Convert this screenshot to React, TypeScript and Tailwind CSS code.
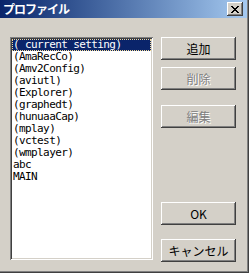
import React from "react";

const items = [
  "( current setting)",
  "(AmaRecCo)",
  "(Amv2Config)",
  "(aviutl)",
  "(Explorer)",
  "(graphedt)",
  "(hunuaaCap)",
  "(mplay)",
  "(vctest)",
  "(wmplayer)",
  "abc",
  "MAIN",
];

const raised =
  "shadow-[inset_-1px_-1px_0_#404040,inset_1px_1px_0_#ffffff,inset_-2px_-2px_0_#808080,inset_2px_2px_0_#d4d0c8]";

function Btn({ label, disabled, className = "" }: { label: string; disabled?: boolean; className?: string }) {
  return (
    <div
      className={`w-[75px] h-[23px] bg-[#d4d0c8] flex items-center justify-center text-[12px] leading-none ${raised} ${className} ${
        disabled ? "text-[#808080] [text-shadow:1px_1px_0_#ffffff]" : "text-black"
      }`}
      style={{ fontFamily: '"Noto Sans CJK JP", sans-serif' }}
    >
      {label}
    </div>
  );
}

export default function App() {
  return (
    <div className="w-[249px] h-[273px] bg-[#d4d0c8] flex flex-col shadow-[inset_-1px_-1px_0_#404040,inset_-2px_-2px_0_#808080]">
      <div className="h-[18px] mr-[2px] bg-gradient-to-r from-[#0a246a] to-[#a6caf0] flex items-center justify-between pl-[3px] pr-[4px]">
        <span
          className="text-white font-bold text-[12px] leading-none tracking-[-1px]"
          style={{ fontFamily: '"Noto Sans CJK JP", sans-serif' }}
        >
          プロファイル
        </span>
        <div className="w-[16px] h-[14px] bg-[#d4d0c8] flex items-center justify-center shadow-[inset_-1px_-1px_0_#404040,inset_1px_1px_0_#ffffff,inset_-2px_-2px_0_#808080,inset_2px_2px_0_#d4d0c8]">
          <svg width="8" height="7" viewBox="0 0 8 7" shapeRendering="crispEdges">
            <path d="M0 0h2v1h-2zM6 0h2v1h-2zM1 1h2v1h-2zM5 1h2v1h-2zM2 2h4v1h-4zM3 3h2v1h-2zM2 4h4v1h-4zM1 5h2v1h-2zM5 5h2v1h-2zM0 6h2v1h-2zM6 6h2v1h-2z" fill="#000" />
          </svg>
        </div>
      </div>
      <div className="flex flex-row pl-[10px] pt-[19px]">
        <div className="w-[143px] h-[223px] bg-white p-[2px] shadow-[inset_1px_1px_0_#808080,inset_-1px_-1px_0_#ffffff,inset_2px_2px_0_#404040,inset_-2px_-2px_0_#d4d0c8]">
          <div className="flex flex-col">
            {items.map((it, i) => (
              <div
                key={it}
                className={`h-[12px] pl-[1px] text-[11px] leading-[12px] tracking-[-0.6px] whitespace-pre ${
                  i === 0 ? "bg-[#0a246a] text-white outline-1 outline-dotted outline-offset-[-1px] outline-[#f5db95]" : "text-black"
                }`}
                style={{ fontFamily: '"DejaVu Sans Mono", monospace' }}
              >
                {it}
              </div>
            ))}
          </div>
        </div>
        <div className="flex flex-col ml-[8px]">
          <Btn label="追加" />
          <Btn label="削除" disabled className="mt-[7px]" />
          <Btn label="編集" disabled className="mt-[15px]" />
          <Btn label="OK" className="mt-[74px]" />
          <Btn label="キャンセル" className="mt-[14px]" />
        </div>
      </div>
    </div>
  );
}
